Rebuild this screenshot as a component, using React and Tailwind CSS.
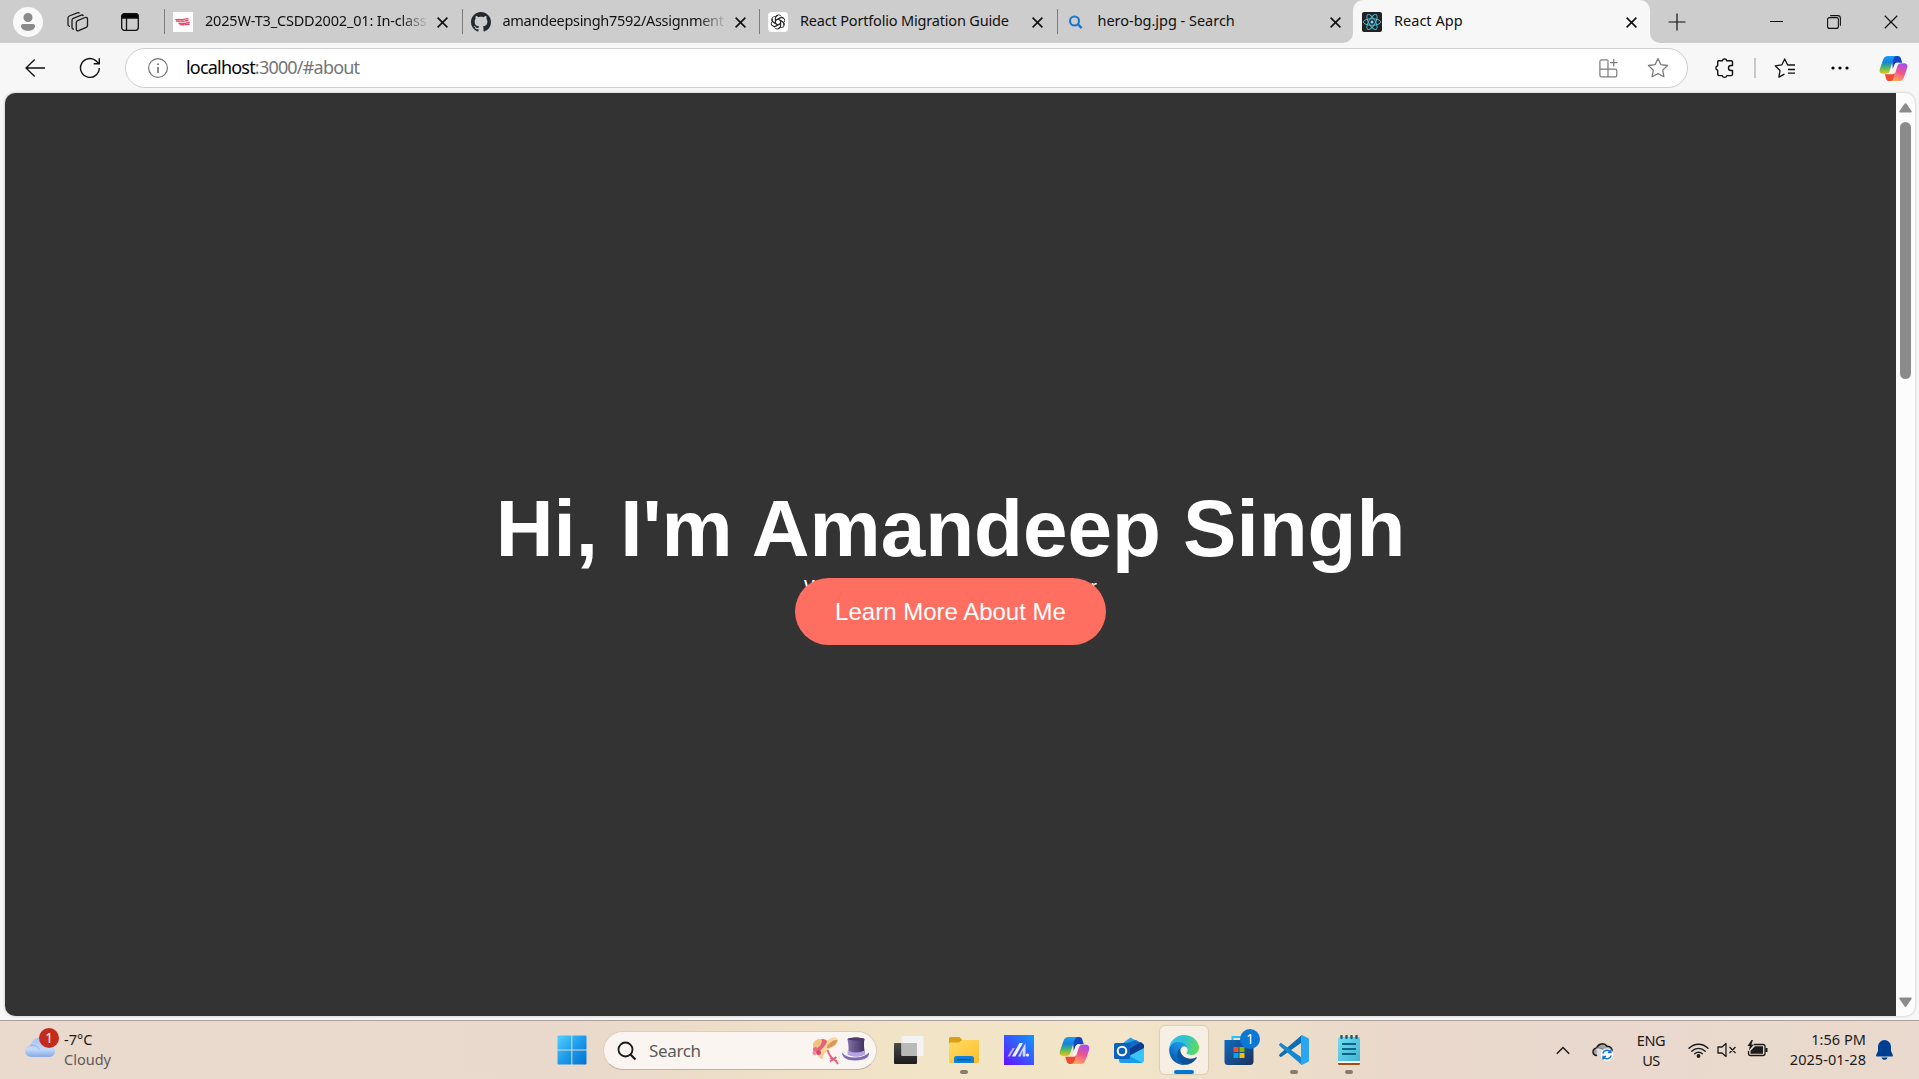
import React, { useId } from 'react';

function Cross({ size = 11, w = 1.6, color = '#111' }) {
  return (
    <svg width={size} height={size} viewBox="0 0 11 11" fill="none" stroke={color} strokeWidth={w}>
      <path d="M.6.6l9.8 9.8M10.4.6L.6 10.4" />
    </svg>
  );
}

function Copilot({ size }) {
  const id = useId().replace(/:/g, '');
  return (
    <svg width={size} height={size} viewBox="0 0 30 30">
      <defs>
        <linearGradient id={id + 'a'} x1="0" y1="0" x2="0" y2="1">
          <stop offset="0" stopColor="#1b9df5" />
          <stop offset=".35" stopColor="#1583dc" />
          <stop offset=".65" stopColor="#4cb866" />
          <stop offset="1" stopColor="#f3c714" />
        </linearGradient>
        <linearGradient id={id + 'b'} x1=".7" y1="0" x2=".3" y2="1">
          <stop offset="0" stopColor="#a64df0" />
          <stop offset=".5" stopColor="#f0558c" />
          <stop offset="1" stopColor="#ffac5e" />
        </linearGradient>
      </defs>
      <path d="M13 2h6.600c1.600 0 2.600 1 3 2.500L24 9h-4.500c-2 0-3.200 1-3.800 3l-1.300 4z" fill="#1345c4" />
      <path d="M17 28h-6.600c-1.600 0-2.600-1-3-2.500L6 21h4.500c2 0 3.200-1 3.800-3l1.300-4z" fill="#ee4b33" />
      <path d="M9.500 2H18c-1.700.3-2.500 1.500-3 3l-4 12.500c-.7 2-2 3-4 3H4.200C1.500 20.500 0 18.600.8 15.800L4.300 5.800C5.100 3.400 6.800 2 9.500 2z" fill={`url(#${id}a)`} />
      <path d="M20.500 28H12c1.700-.3 2.500-1.500 3-3l4-12.500c.7-2 2-3 4-3h2.800c2.700 0 4.200 1.900 3.400 4.700l-3.500 10c-.8 2.400-2.500 3.800-5.200 3.800z" fill={`url(#${id}b)`} />
      <path d="M16.200 10.500c.6-1 1.600-1.500 3-1.500h1.500c-1 .6-1.500 1.500-1.900 2.800l-2.300 7.200c-.5 1.500-1.500 2-3 2h-2c1-.5 1.600-1.500 2-2.800z" fill="#f8f4ef" />
    </svg>
  );
}

const LambtonIcon = () => (
  <svg width="20" height="20" viewBox="0 0 20 20">
    <rect width="20" height="20" fill="#fff" />
    <path d="M2.300 7.600h3M5.200 7.300l3.600.3M8.600 7.700l3-.3M11.600 7.200l3.800-.5M3 9.200l4.800.2M8 9.200l3.800.2M12 8.800l3.500-.4M5.500 11.300l4 .2M9.600 11.500l3.400-.2M13 11l3.600-.4M6.500 12.600l5 .2M12 12.700l4.600-.3" stroke="#f0405f" strokeWidth="1.300" />
  </svg>
);

const GithubIcon = () => (
  <svg width="20" height="20" viewBox="0 0 16 16">
    <path fill="#24292f" d="M8 0C3.580 0 0 3.580 0 8c0 3.540 2.290 6.530 5.470 7.590.4.070.55-.17.55-.38 0-.19-.01-.82-.01-1.490-2.010.37-2.530-.49-2.690-.94-.09-.23-.48-.94-.82-1.130-.28-.15-.68-.52-.01-.53.63-.01 1.080.58 1.230.82.72 1.210 1.870.87 2.330.66.07-.52.28-.87.51-1.070-1.780-.2-3.640-.89-3.640-3.950 0-.87.31-1.590.82-2.150-.08-.2-.36-1.020.08-2.120 0 0 .67-.21 2.200.82.64-.18 1.320-.27 2-.27s1.360.09 2 .27c1.530-1.040 2.200-.82 2.200-.82.44 1.100.16 1.920.08 2.120.51.56.82 1.270.82 2.150 0 3.070-1.870 3.750-3.650 3.950.29.25.54.73.54 1.480 0 1.070-.01 1.930-.01 2.200 0 .21.15.46.55.38A8.010 8.010 0 0 0 16 8c0-4.420-3.580-8-8-8z" />
  </svg>
);

const KnotIcon = () => (
  <svg width="20" height="20" viewBox="0 0 20 20" fill="none" stroke="#222" strokeWidth=".9">
    <rect width="20" height="20" rx="4" fill="#fff" stroke="none" />
    {[0, 60, 120, 180, 240, 300].map((a) => (
      <path key={a} transform={`rotate(${a} 10 10)`} d="M7.600 11.400V6.200c0-3.600 4.300-4.200 5.700-1.700M7.600 8.200l4-2.300c1.400-.8 3.200-.3 4 .9" />
    ))}
  </svg>
);

const SearchFav = () => (
  <svg width="20" height="20" viewBox="0 0 20 20" fill="none" stroke="#1b78d0">
    <circle cx="8.500" cy="9" r="4.500" strokeWidth="2.100" />
    <path d="M11.700 12.200l4 4" strokeWidth="2.400" />
  </svg>
);

const ReactIcon = () => (
  <svg width="20" height="20" viewBox="0 0 20 20" fill="none" stroke="#53c1de" strokeWidth=".9">
    <rect width="20" height="20" rx="2" fill="#222" stroke="none" />
    <ellipse cx="10" cy="10" rx="8.600" ry="3.300" />
    <ellipse cx="10" cy="10" rx="8.600" ry="3.300" transform="rotate(60 10 10)" />
    <ellipse cx="10" cy="10" rx="8.600" ry="3.300" transform="rotate(120 10 10)" />
    <circle cx="10" cy="10" r="1.500" fill="#7fe3ff" stroke="none" />
  </svg>
);

function Tab({ icon, title, active, fade, tracking }) {
  return (
    <div className={'relative flex h-[43px] shrink-0 items-center ' + (active ? '-ml-px w-[297px] rounded-t-[10px] bg-[#f7f7f7]' : 'w-[297.5px]')}>
      {active ? (
        <>
          <svg className="absolute bottom-0 -left-[10px]" width="10" height="10"><path d="M10 0v10H0A10 10 0 0 0 10 0z" fill="#f7f7f7" /></svg>
          <svg className="absolute bottom-0 -right-[10px]" width="10" height="10"><path d="M0 0v10h10A10 10 0 0 1 0 0z" fill="#f7f7f7" /></svg>
        </>
      ) : null}
      <div className={'h-[25px] w-px ' + (active ? '' : 'bg-[#7d7d7d]')} />
      <div className="ml-2 h-5 w-5 shrink-0">{icon}</div>
      <div className={'ml-3 w-[222px] overflow-hidden whitespace-nowrap pb-[3px] text-[14.500px] leading-5 text-[#111] ' + tracking + (fade ? ' [mask-image:linear-gradient(90deg,#000_88%,transparent_101%)]' : '')}>
        {title}
      </div>
      <div className="ml-[10px] pt-px"><Cross /></div>
    </div>
  );
}

function TabStrip() {
  return (
    <div className="flex h-[43px] w-full items-center bg-[#cdcdcd]">
      <div className="ml-[13px] flex h-[30px] w-[30px] items-center justify-center rounded-full bg-[#f9f9f9]">
        <svg width="16" height="18" viewBox="0 0 16 18" fill="#8a8a8a">
          <circle cx="8" cy="4.500" r="4.500" />
          <path d="M3 11h10a2 2 0 0 1 2 2c0 3-3 4.800-7 4.800S1 16 1 13a2 2 0 0 1 2-2z" />
        </svg>
      </div>
      <svg className="ml-6" width="22" height="22" viewBox="0 0 22 22" fill="none" stroke="#1a1a1a" strokeWidth="1.300" strokeLinejoin="round">
        <path d="M9.300 11.500c0-.9.500-1.600 1.300-1.900l7.500-3.100c1.300-.5 2.400.2 2.400 1.500v6.500c0 .9-.5 1.600-1.300 1.900l-7.500 3.300c-1.300.5-2.400-.2-2.400-1.500z" />
        <path d="M7 18.200c-1.200.1-2-.6-2-1.800V9.300c0-.9.500-1.600 1.300-1.900l8-3.200c1-.4 1.800 0 2.200.7M3 15.300c-1.200.1-2-.6-2-1.800V6.900C1 6 1.500 5.300 2.300 5l8-3.200c1-.4 1.800 0 2.200.6" />
      </svg>
      <svg className="ml-8" width="18" height="18" viewBox="0 0 18 18" fill="none" stroke="#111" strokeWidth="1.300">
        <rect x=".7" y=".7" width="16.600" height="16.600" rx="2.800" />
        <path d="M1 3.500C1 2 2 1 3.500 1h11C16 1 17 2 17 3.500V5H1z" fill="#000" />
        <path d="M5.500 5v12" />
      </svg>
      <div className="ml-[25px] flex">
        <Tab icon={<LambtonIcon />} title="2025W-T3_CSDD2002_01: In-class" fade tracking="tracking-[-0.180px]" />
        <Tab icon={<GithubIcon />} title="amandeepsingh7592/Assignment" fade tracking="tracking-[-0.310px]" />
        <Tab icon={<KnotIcon />} title="React Portfolio Migration Guide" tracking="tracking-[-0.180px]" />
        <Tab icon={<SearchFav />} title="hero-bg.jpg - Search" tracking="tracking-[-0.020px]" />
        <Tab active icon={<ReactIcon />} title="React App" tracking="tracking-[0.020px]" />
      </div>
      <svg className="ml-[18px]" width="18" height="18" viewBox="0 0 18 18" stroke="#111" strokeWidth="1.200"><path d="M9 .5v17M.5 9h17" /></svg>
      <div className="ml-auto mr-[21px] flex items-center gap-[43.500px]">
        <div className="h-px w-[13px] bg-[#111]" />
        <svg width="14" height="14" viewBox="0 0 14 14" fill="none" stroke="#111" strokeWidth="1.100">
          <rect x=".6" y="2.600" width="10.800" height="10.800" rx="2" />
          <path d="M3.200.6h7.600c1.600 0 2.600 1 2.600 2.600v7.600" />
        </svg>
        <Cross size={14} w={0.9} />
      </div>
    </div>
  );
}

function Toolbar() {
  return (
    <div className="flex h-[50px] w-full items-center bg-[#f7f7f7]">
      <svg className="ml-[25px]" width="20" height="18" viewBox="0 0 20 18" fill="none" stroke="#111" strokeWidth="1.300"><path d="M20 9H1M9.700.5L1 9l8.700 8.500" /></svg>
      <svg className="ml-[34px]" width="22" height="22" viewBox="0 0 22 22" fill="none" stroke="#111" strokeWidth="1.400"><path d="M20.300 11a9.400 9.400 0 1 1-3.200-7.100l2.900 2.700M20.300 1.300v5.500h-5.600" /></svg>
      <div className="ml-[24px] flex h-10 w-[1563px] items-center rounded-full border border-[#cfcfcf] bg-white">
        <svg className="ml-[22px]" width="20" height="20" viewBox="0 0 20 20" fill="none" stroke="#757575" strokeWidth="1.200">
          <circle cx="10" cy="10" r="9.400" /><path d="M10 9v6" strokeWidth="1.700" /><circle cx="10" cy="6.200" r="1" fill="#757575" stroke="none" />
        </svg>
        <div className="ml-[18px] pb-px text-[18px] tracking-[-0.800px] text-[#757575]"><span className="text-[#050505]">localhost</span>:3000/#about</div>
        <svg className="ml-auto" width="19" height="19" viewBox="0 0 19 19" fill="none" stroke="#7b7b7b" strokeWidth="1.200">
          <path d="M9 1.800C9 1.200 8.500.9 8 .9H2.500C1.500.9.900 1.500.9 2.500v13.800c0 1 .6 1.600 1.600 1.600h13.700c1 0 1.600-.6 1.600-1.600v-4.600c0-1-.6-1.600-1.600-1.600H.9M9 1.500v16.400M14.700 0v7.500M11 3.700h7.500" />
        </svg>
        <svg className="ml-[29px] mr-[18px]" width="22" height="22" viewBox="0 0 22 22" fill="none" stroke="#7b7b7b" strokeWidth="1.300" strokeLinejoin="round">
          <path d="M11 1.500l2.900 6.100 6.700.9-4.900 4.600 1.200 6.700L11 16.600l-5.900 3.200 1.200-6.700L1.400 8.500l6.700-.9z" />
        </svg>
      </div>
      <svg className="ml-[25.500px]" width="22" height="22" viewBox="0 0 22 22" fill="none" stroke="#111" strokeWidth="1.400" strokeLinejoin="round">
        <path d="M4.500 3.800h3.800a2.300 2.300 0 0 1 4.500 0h4.400c.8 0 1.300.5 1.300 1.300v3.400h-1.500a2.500 2.500 0 0 0 0 5h1.500v3.800c0 .8-.5 1.300-1.300 1.300h-4.400a2.300 2.300 0 0 1-4.500 0H5c-.8 0-1.300-.5-1.300-1.300v-4.100a2.300 2.300 0 0 1 0-4.500V5.100c0-.8.300-1.300.8-1.300z" />
      </svg>
      <div className="ml-[18.500px] h-5 w-[1.500px] bg-[#c9c9c9]" />
      <svg className="ml-[18.500px]" width="22" height="20" viewBox="0 0 22 20" fill="none" stroke="#111" strokeWidth="1.300" strokeLinejoin="round">
        <path d="M21 7h-7.300L10.700 1 7.900 6.800l-6.700 1 4.800 4.700-1.100 6.600 5.500-3M14 11.500h7M14 15.200h7" />
      </svg>
      <svg className="ml-[34.500px]" width="18" height="4" viewBox="0 0 18 4"><circle cx="2" cy="2" r="1.600" /><circle cx="9" cy="2" r="1.600" /><circle cx="16" cy="2" r="1.600" /></svg>
      <div className="ml-[30px]"><Copilot size={29} /></div>
    </div>
  );
}

function Page() {
  return (
    <div className="h-[927px] w-full bg-[#f7f7f7] px-[5px] pb-[4px]">
      <div className="flex h-[923px] w-[1910px] overflow-hidden rounded-[10px] bg-[#fcfcfc] shadow-[0_0_3px_rgba(0,0,0,0.250)]">
        <div className="flex h-full w-[1891px] flex-col items-center bg-[#333] font-['Liberation_Sans',Arial,sans-serif] text-white">
          <h1 className="mt-[390px] h-[91px] text-[80px] leading-[92px] font-bold whitespace-nowrap">Hi, I'm Amandeep Singh</h1>
          <p className="h-[4px] text-[20px] leading-[26px] whitespace-nowrap">Web Developer and Programmer</p>
          <button className="relative h-[67px] w-[311px] rounded-full bg-[#ff6f61] text-[24px] leading-[28px]">Learn More About Me</button>
        </div>
        <div className="flex w-[19px] flex-col items-center">
          <svg className="mt-[10px]" width="13" height="10" viewBox="0 0 13 10"><path d="M5.500.8c.6-.9 1.400-.9 2 0l5 7.200c.5.800.2 1.600-.8 1.600H1.300C.3 9.600 0 8.800.5 8z" fill="#8b8b8b" /></svg>
          <div className="mt-[9px] h-[257px] w-[11px] rounded-full bg-[#8b8b8b]" />
          <svg className="mt-auto mb-[9px]" width="13" height="10" viewBox="0 0 13 10"><path d="M5.500 9.200c.6.900 1.400.9 2 0l5-7.200c.5-.8.2-1.600-.8-1.600H1.300C.3.400 0 1.200.5 2z" fill="#8b8b8b" /></svg>
        </div>
      </div>
    </div>
  );
}

const StartIcon = () => (
  <svg width="30" height="30" viewBox="0 0 30 30">
    <defs><linearGradient id="win" x1="0" y1="0" x2="1" y2="1"><stop offset="0" stopColor="#4fd3ff" /><stop offset=".5" stopColor="#1d9bea" /><stop offset="1" stopColor="#0672d0" /></linearGradient></defs>
    <path d="M1.500.5H14.300v14H.5V1.500a1 1 0 0 1 1-1zM15.300.5h13.200a1 1 0 0 1 1 1v13H15.300zM.5 15.500h13.800v14H1.500a1 1 0 0 1-1-1zM15.300 15.500h14.200v13a1 1 0 0 1-1 1H15.300z" fill="url(#win)" />
  </svg>
);

const Hats = () => (
  <svg width="58" height="30" viewBox="0 0 58 30">
    <defs>
      <linearGradient id="straw" x1="0" y1="0" x2="1" y2="1"><stop offset="0" stopColor="#efb877" /><stop offset=".5" stopColor="#fbd99c" /><stop offset="1" stopColor="#d9954f" /></linearGradient>
      <linearGradient id="top" x1="0" y1="0" x2="1" y2="0"><stop offset="0" stopColor="#8474ae" /><stop offset=".35" stopColor="#6a598f" /><stop offset="1" stopColor="#3f3160" /></linearGradient>
    </defs>
    <path d="M2 9C2 5 7 2.500 12 3c3 .3 4 1.500 5 1.300C20 1.500 25 .5 26.500 3c1.500 4-3 8-7.500 9.500-4 1.500-6 5-8 10.500-3-1-4-2.500-4-5C3 17 1.500 13 2 9z" fill="url(#straw)" />
    <path d="M17 9c3-4 7-5.500 9.500-5-1.500 5-6 7-9 8-2 .6-2-1-.5-3z" fill="#d6975a" />
    <path d="M10.500 2.800c3 .5 5 1.500 5.500 2.700-2 5-5 8-9 10.500l-3-2.500C9 11 12 7 10.500 2.800z" fill="#e4627a" />
    <path d="M9.500 3c2 4-1 8-6 10.500C2 10.500 2 6 4.500 4.500 6 3.500 8 3 9.500 3z" fill="#f3c283" />
    <circle cx="4.500" cy="13.500" r="2.500" fill="#ee6b87" /><circle cx="7.500" cy="16.500" r="2.500" fill="#df4868" /><circle cx="3.500" cy="17" r="2.100" fill="#f28aa0" />
    <path d="M16.500 14c1 3.500 3 7 6 9M19 22l7 3M25.500 21l-6.500 4.500M24 24l3 4" stroke="#e4607b" strokeWidth="1.900" fill="none" />
    <path d="M31 16.500c3 4 8 5.500 14 5 6-.4 10-2 13-5 .5 4-3 7.500-13 8-9 .3-14-3-14-8z" fill="#7c69b4" />
    <path d="M36.500 3c4-2 12-2 17 0-1 5-.5 9 .5 15-5 3-12 3-17 .500 1-6 .5-10-.5-15.500z" fill="url(#top)" />
    <path d="M36.700 14.500c5 2.500 11.500 2.500 17 0l.5 3.700c-5 3-12.500 3-17.800.3z" fill="#b3a4e2" />
    <ellipse cx="45" cy="3" rx="8.500" ry="1.500" fill="#4a3b6c" />
  </svg>
);

const TaskView = () => (
  <svg width="30" height="30" viewBox="0 0 30 30">
    <defs><linearGradient id="tv" x1="0" y1="0" x2="0" y2="1"><stop offset="0" stopColor="#4a4a4a" /><stop offset="1" stopColor="#1b1b1b" /></linearGradient></defs>
    <rect x="0" y="8" width="23" height="21" rx="1" fill="url(#tv)" />
    <rect x="7.500" y="1" width="22" height="20" rx="1" fill="#f3f3f3" />
    <path d="M7.500 8H23v13H8.500a1 1 0 0 1-1-1z" fill="#b9b9b9" />
  </svg>
);

const FolderIcon = () => (
  <svg width="30" height="30" viewBox="0 0 30 30">
    <defs><linearGradient id="fo" x1="0" y1="0" x2="1" y2="1"><stop offset="0" stopColor="#ffdc66" /><stop offset="1" stopColor="#fdbd2a" /></linearGradient></defs>
    <path d="M0 3.500A1.500 1.500 0 0 1 1.500 2h8c1 0 1.500.5 2.300 1.300L13 5h15.500A1.500 1.500 0 0 1 30 6.500V15H0z" fill="#dda010" />
    <path d="M0 9a1.500 1.500 0 0 1 1.500-1.500H10L13 5h15.500A1.500 1.500 0 0 1 30 6.500v20a1.500 1.500 0 0 1-1.500 1.500h-27A1.500 1.500 0 0 1 0 26.500z" fill="url(#fo)" />
    <path d="M5 28v-4.500A2.500 2.500 0 0 1 7.500 21h15a2.500 2.500 0 0 1 2.500 2.500V28z" fill="#1181d8" />
    <path d="M8 24.700h14" stroke="#0b4f8f" strokeWidth="1.200" />
  </svg>
);

const AsusIcon = () => (
  <svg width="30" height="30" viewBox="0 0 30 30">
    <defs><linearGradient id="as" x1="0" y1="1" x2="1" y2="0"><stop offset="0" stopColor="#6410ff" /><stop offset=".5" stopColor="#3b55ff" /><stop offset="1" stopColor="#0a9bff" /></linearGradient></defs>
    <rect width="30" height="30" fill="url(#as)" />
    <path d="M3.500 21.500L8.500 13h2.300L5.800 21.500z" fill="#b9b0ff" />
    <path d="M7.800 21.500L15.500 8h3.500l-7.700 13.500z" fill="#f4f1ff" />
    <path d="M14 21.500L21.500 8v13.500h-2.800V15.500l-2.200 6z" fill="#d5d8ff" />
    <circle cx="23.500" cy="20" r="1.500" fill="#fff" />
  </svg>
);

const OutlookIcon = () => (
  <svg width="30" height="30" viewBox="0 0 30 30">
    <path d="M5 11L16.500 2.500 30 10v5L8 22z" fill="#28a0e8" />
    <path d="M8 10l14-5 8 5v4L14 20z" fill="#0f6cc8" />
    <path d="M13 15l14-8 3 3v4L16 22z" fill="#0a3d91" />
    <path d="M30 13v12a3 3 0 0 1-3 3H8a3 3 0 0 1-3-3l10-4z" fill="#38c6f8" />
    <path d="M5 22l11-1 12 6.800-1 .2H8a3 3 0 0 1-3-3z" fill="#1a9de8" />
    <rect x="0" y="8" width="16" height="16" rx="1.500" fill="#0b62bd" />
    <circle cx="8" cy="16" r="4.300" fill="none" stroke="#fff" strokeWidth="2" />
  </svg>
);

const EdgeIcon = () => (
  <svg width="30" height="30" viewBox="0 0 256 256">
    <defs>
      <linearGradient id="e1" x1="63.300" y1="84" x2="241.700" y2="84" gradientUnits="userSpaceOnUse" gradientTransform="translate(0 90)"><stop offset="0" stopColor="#0c59a4" /><stop offset="1" stopColor="#114a8b" /></linearGradient>
      <linearGradient id="e2" x1="157" y1="100" x2="46" y2="222" gradientUnits="userSpaceOnUse"><stop offset="0" stopColor="#1b9de2" /><stop offset=".5" stopColor="#1283d8" /><stop offset="1" stopColor="#0a5cb0" /></linearGradient>
      <linearGradient id="e3" x1="10" y1="60" x2="256" y2="130" gradientUnits="userSpaceOnUse"><stop offset="0" stopColor="#35c1f1" /><stop offset=".45" stopColor="#2fc2cf" /><stop offset="1" stopColor="#66df4c" /></linearGradient>
    </defs>
    <path fill="url(#e1)" d="M231 190.500c-3.400 1.800-6.900 3.400-10.500 4.700a101 101 0 0 1-35.600 6.400c-46.900 0-87.700-32.200-87.700-73.700a31.300 31.300 0 0 1 16.300-27.200c-42.400 1.800-53.300 46-53.300 71.900 0 73.200 67.400 80.600 82 80.600 7.800 0 19.600-2.300 26.700-4.600l1.300-.4a128 128 0 0 0 66.600-52.800 4 4 0 0 0-5.800-4.900z" />
    <path fill="url(#e2)" d="M105.700 241.400a79.200 79.200 0 0 1-22.700-21.300 80.700 80.700 0 0 1 30.500-119.400c3.200-1.500 8.500-4.100 15.600-4a32.400 32.400 0 0 1 25.700 13 31.900 31.900 0 0 1 6.300 18.700c0-.2 24.500-79.600-80-79.600C37.200 48.800 1.200 90.500 1.200 127a130.700 130.700 0 0 0 12.100 56 128 128 0 0 0 156.400 67.100 75.500 75.500 0 0 1-63.900-8.600z" />
    <path fill="url(#e3)" d="M152.300 148.900c-.8 1-3.300 2.500-3.300 5.700 0 2.600 1.700 5.100 4.700 7.200 14.400 10 41.500 8.700 41.600 8.700a59.600 59.600 0 0 0 30.300-8.300 61.400 61.400 0 0 0 30.400-52.900c.3-22.400-8-37.300-11.300-43.900C223.500 23.900 177.700 0 128 0A128 128 0 0 0 0 126.200c.5-36.500 36.800-66 80-66 3.500 0 23.500.3 42 10.100 16.300 8.600 24.900 18.900 30.800 29.200 6.200 10.700 7.300 24.100 7.300 29.500s-2.700 13.300-7.800 19.900z" />
  </svg>
);

const StoreIcon = () => (
  <svg width="30" height="30" viewBox="0 0 30 30">
    <defs><linearGradient id="st" x1="0" y1="0" x2="1" y2="1"><stop offset="0" stopColor="#0f6cc0" /><stop offset="1" stopColor="#1d3158" /></linearGradient></defs>
    <path d="M8.500 6V2h12v4" fill="none" stroke="#2fc0ee" strokeWidth="2" />
    <path d="M.5 5h29v21.500a3.500 3.500 0 0 1-3.500 3.500H4A3.500 3.500 0 0 1 .5 26.500z" fill="url(#st)" />
    <path d="M9.500 12h5v5h-5z" fill="#f25022" /><path d="M15.500 12h5v5h-5z" fill="#7fba00" /><path d="M9.500 18h5v5h-5z" fill="#00a4ef" /><path d="M15.500 18h5v5h-5z" fill="#ffb900" />
  </svg>
);

const CodeIcon = () => (
  <svg width="30" height="30" viewBox="0 0 30 30">
    <path d="M1.800 22.200L.5 21a1.200 1.200 0 0 1 0-1.700L22 .7V8z" fill="#0d6db4" />
    <path d="M1.800 7.800L.5 9a1.200 1.200 0 0 0 0 1.700L22 29.300V22z" fill="#1488cf" />
    <path d="M22 .3c.4-.3.900-.3 1.300-.1L29 3c.6.3 1 .9 1 1.600v20.800c0 .7-.4 1.300-1 1.600l-5.700 2.800c-.4.2-.9.200-1.300-.1z" fill="#2aa5f0" />
  </svg>
);

const NotepadIcon = () => (
  <svg width="30" height="30" viewBox="0 0 30 30">
    <defs><linearGradient id="np" x1="0" y1="0" x2="1" y2="1"><stop offset="0" stopColor="#6fdcf2" /><stop offset="1" stopColor="#42b4d3" /></linearGradient></defs>
    <rect x="4" y="24" width="22" height="6" rx="1.500" fill="#a04d12" /><rect x="4" y="24" width="22" height="4" fill="#f4f4f4" />
    <path d="M4 4a2 2 0 0 1 2-2h18a2 2 0 0 1 2 2v22H4z" fill="url(#np)" />
    <path d="M8 9h14M8 14h14M8 19h14" stroke="#0e6484" strokeWidth="2" />
    <path d="M7.500 1v1.800M12.500 1v1.800M17.500 1v1.800M22.500 1v1.800" stroke="#185a70" strokeWidth="2.400" strokeLinecap="round" />
  </svg>
);

function TaskItem({ children, dot, active, badge }) {
  return (
    <div className={'relative flex h-12 w-12 items-center justify-center ' + (active ? 'rounded-[5px] bg-[#f7efe4] shadow-[0_0_1px_1px_rgba(180,160,130,0.300)]' : '')}>
      {children}
      {dot ? <div className="absolute bottom-0 left-5 h-[4px] w-2 rounded-full bg-[#857c6e]" /> : null}
      {active ? <div className="absolute bottom-0 left-[14px] h-1 w-5 rounded-full bg-[#0078d4]" /> : null}
      {badge ? <div className="absolute top-[3px] right-[3px] flex h-5 w-5 items-center justify-center rounded-full bg-[#0a78d4] text-[13.500px] text-white">{badge}</div> : null}
    </div>
  );
}

function Taskbar() {
  return (
    <div className="grid h-[59px] w-full grid-cols-[543px_1fr_390px] border-t border-[#aaa29a] bg-[linear-gradient(90deg,#ead9cd_0%,#e9d9cc_30%,#f1e3c6_46%,#f2e5c8_58%,#e9d8cb_73%,#ead8ce_85%,#e8dacc_92%,#ead9ce_100%)]">
      <div className="flex pl-[24px]">
        <div className="relative mt-[16px] h-[22px] w-[32px]">
          <svg width="32" height="22" viewBox="0 0 32 22">
            <defs><linearGradient id="cl" x1="0" y1="0" x2="0" y2="1"><stop offset="0" stopColor="#a9c2f5" /><stop offset=".6" stopColor="#c5d8f5" /><stop offset="1" stopColor="#83a9e8" /></linearGradient></defs>
            <path d="M8 20c-9 0-9-10.500-1.500-11.500C8 2 13 0 17 1c6 .5 8 4 8.500 7.500C33 9 33 20 25 20z" fill="url(#cl)" />
            <path d="M6 8.500c5-1 8 1 9 4" fill="none" stroke="#8fb0ee" />
          </svg>
          <div className="absolute -top-[9px] left-[15px] flex h-5 w-5 items-center justify-center rounded-full bg-[#c42b1c] text-[13.500px] text-white">1</div>
        </div>
        <div className="ml-[8px] mt-[8px] text-[14.500px] leading-[20px] text-[#1b1b1b]">-7°C<div className="text-[#5f5a56]">Cloudy</div></div>
      </div>
      <div className="flex items-start pt-[5px]">
        <div className="mt-[9px] ml-[14px]"><StartIcon /></div>
        <div className="mt-[5px] ml-[16px] flex h-[39px] w-[274px] items-center rounded-full border border-[#dccdbf] border-b-[#bfb1a3] bg-[#faf5f0]">
          <svg className="ml-[13px]" width="20" height="20" viewBox="0 0 20 20" fill="none" stroke="#1b1b1b"><circle cx="8.500" cy="8.500" r="7" strokeWidth="1.800" /><path d="M13.500 13.500l5 5" strokeWidth="2.200" /></svg>
          <span className="ml-[12px] text-[17px] tracking-[-0.350px] text-[#5d5a58]">Search</span>
          <div className="ml-auto mr-[7px] pt-px"><Hats /></div>
        </div>
        <div className="ml-[8px] flex gap-[7px]">
          <TaskItem><TaskView /></TaskItem>
          <TaskItem dot><FolderIcon /></TaskItem>
          <TaskItem><AsusIcon /></TaskItem>
          <TaskItem><Copilot size={31} /></TaskItem>
          <TaskItem><OutlookIcon /></TaskItem>
          <TaskItem active><EdgeIcon /></TaskItem>
          <TaskItem badge="1"><StoreIcon /></TaskItem>
          <TaskItem dot><CodeIcon /></TaskItem>
          <TaskItem dot><NotepadIcon /></TaskItem>
        </div>
      </div>
      <div className="flex items-center text-[14.500px] leading-5 text-[#1b1b1b]">
        <svg className="ml-[27px]" width="14" height="9" viewBox="0 0 14 9" fill="none" stroke="#1b1b1b" strokeWidth="1.500"><path d="M.8 7.700L7 1.500l6.200 6.200" /></svg>
        <svg className="ml-[22px] mt-[2px]" width="23" height="19" viewBox="0 0 23 19">
          <path d="M5 13.500c-5.500 0-5-7-.3-7.500C6 1.500 12 .3 15 4.200c4-.2 5.500 3 5 5" fill="#a4a4a4" stroke="#1b1b1b" strokeWidth="1.500" />
          <path d="M4.500 6.200c3-.8 6 .8 8.500 3L9 13H5" fill="#dedede" />
          <path d="M4.700 6c3-.6 6 .8 8 2.500" stroke="#777" fill="none" />
          <circle cx="15" cy="12.500" r="6.300" fill="#fff" />
          <path d="M10.800 11.500a4.400 4.400 0 0 1 7.800-1.500M19.200 13.500a4.400 4.400 0 0 1-7.800 1.500M18.900 7.500v3h-3M11.100 17.500v-3h3" fill="none" stroke="#1677d2" strokeWidth="1.500" />
        </svg>
        <div className="ml-[17px] w-[38px] pb-px text-center tracking-[-0.450px]">ENG<br />US</div>
        <svg className="ml-[17.500px]" width="21" height="16" viewBox="0 0 21 16" fill="none" stroke="#1b1b1b" strokeWidth="1.400" strokeLinecap="round">
          <path d="M1 6.300c5.300-5.400 13.700-5.400 19 0M3.800 9.200c3.700-3.800 9.700-3.800 13.400 0M6.700 11.800c2.100-2.100 5.500-2.100 7.600 0" /><circle cx="10.500" cy="14" r="1.200" fill="#1b1b1b" />
        </svg>
        <svg className="ml-[8.500px]" width="20" height="16" viewBox="0 0 20 16" fill="none" stroke="#1b1b1b" strokeWidth="1.300" strokeLinejoin="round"><path d="M9 1.500v13L5 11H1V5h4zM12.500 5l6 6M18.500 5l-6 6" /></svg>
        <svg className="ml-[10px] -mt-[3px]" width="21" height="17" viewBox="0 0 21 17">
          <path d="M7 4.500h9c1 0 2 .7 2 2v7c0 1-.8 2-2 2H3.500c-1.300 0-2-.8-2-2V11" fill="none" stroke="#1b1b1b" strokeWidth="1.300" />
          <path d="M8 6.300h8v7.500H3.500v-3z" fill="#1b1b1b" /><path d="M18.500 8h2v4h-2z" fill="#1b1b1b" /><path d="M4.500 0L.5 6h2.300L1.800 10.500 7 4.500H4.300L6 0z" fill="#1b1b1b" />
        </svg>
        <div className="ml-auto pb-[2px] text-right tracking-[0.050px]">1:56 PM<br />2025-01-28</div>
        <svg className="ml-[10px] mr-[26px]" width="17" height="20" viewBox="0 0 17 20" fill="#003e92"><path d="M8.500 0a6.500 6.500 0 0 1 6.500 6.500V11l1.800 4c.3.900-.1 1.500-1 1.500H1.200c-.9 0-1.300-.6-1-1.500L2 11V6.500A6.500 6.500 0 0 1 8.500 0zM5.500 17.500h6c-.4 1.500-1.500 2.300-3 2.300s-2.600-.8-3-2.300z" /></svg>
      </div>
    </div>
  );
}

export default function App() {
  return (
    <div className="flex h-[1079px] w-[1919px] flex-col overflow-hidden font-['Noto_Sans',sans-serif]">
      <TabStrip />
      <Toolbar />
      <Page />
      <Taskbar />
    </div>
  );
}
